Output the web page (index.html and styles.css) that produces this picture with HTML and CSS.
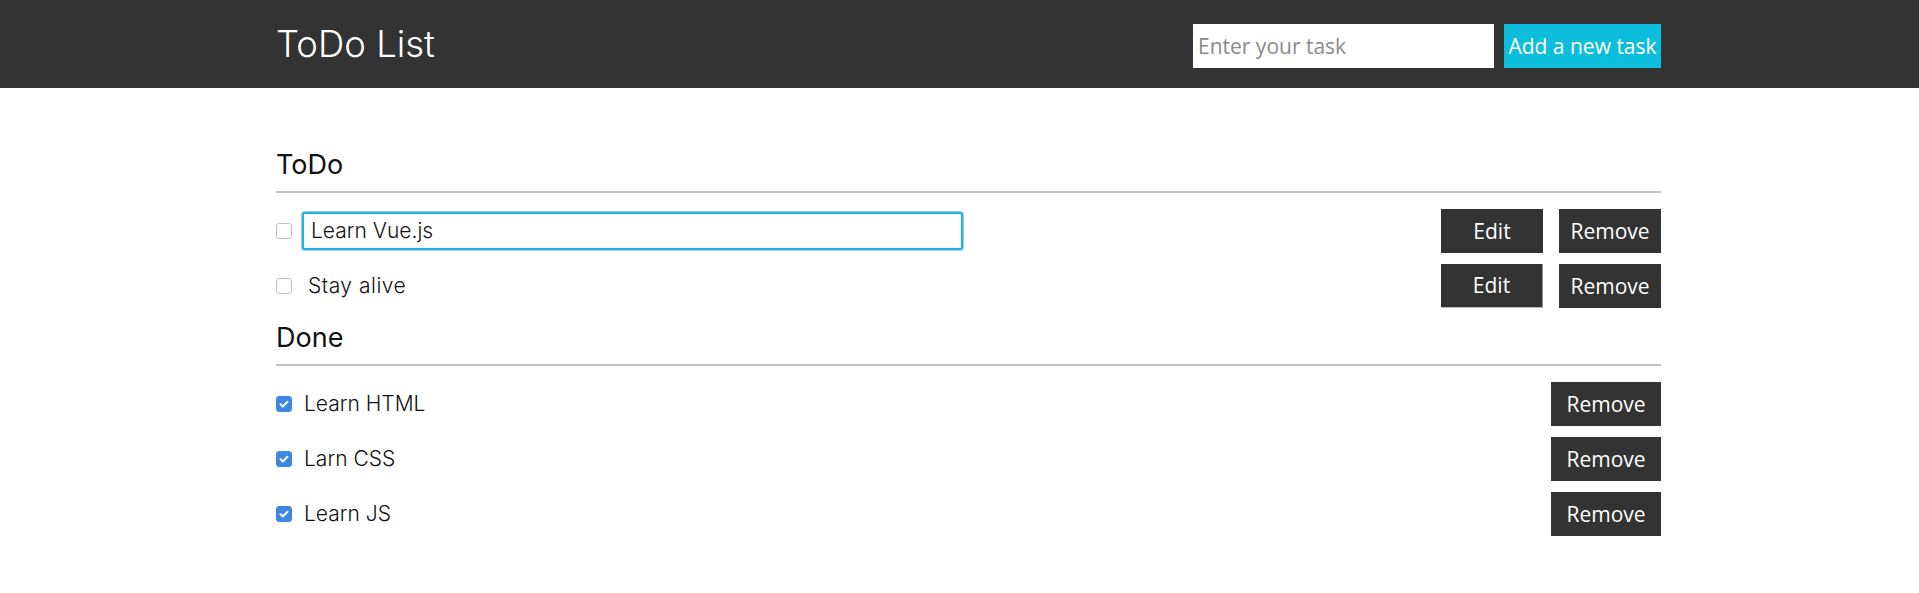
FILE: index.html
```html
<!DOCTYPE html>
<html>
<head>
<meta charset="utf-8">
<title>ToDo List</title>
<link rel="stylesheet" href="styles.css">
</head>
<body>
<header class="topbar">
  <div class="topbar-inner">
    <h1 class="brand">ToDo List</h1>
    <div class="add-form">
      <input class="task-input" type="text" placeholder="Enter your task">
      <button class="add-btn">Add a new task</button>
    </div>
  </div>
</header>
<main class="content">
  <section class="group">
    <h2 class="group-title">ToDo</h2>
    <div class="row">
      <span class="box"></span>
      <input class="edit-input" type="text" value="Learn Vue.js">
      <div class="actions">
        <button class="btn">Edit</button>
        <button class="btn">Remove</button>
      </div>
    </div>
    <div class="row">
      <span class="box"></span>
      <span class="label label-todo">Stay alive</span>
      <div class="actions">
        <button class="btn btn-hover">Edit</button>
        <button class="btn">Remove</button>
      </div>
    </div>
  </section>
  <section class="group">
    <h2 class="group-title">Done</h2>
    <div class="row">
      <span class="box checked"><svg viewBox="0 0 16 16" width="16" height="16"><path d="M4 8.2l2.6 2.6L12 5.4" fill="none" stroke="#fff" stroke-width="2.2" stroke-linecap="round" stroke-linejoin="round"/></svg></span>
      <span class="label">Learn HTML</span>
      <div class="actions"><button class="btn btn-wide">Remove</button></div>
    </div>
    <div class="row">
      <span class="box checked"><svg viewBox="0 0 16 16" width="16" height="16"><path d="M4 8.2l2.6 2.6L12 5.4" fill="none" stroke="#fff" stroke-width="2.2" stroke-linecap="round" stroke-linejoin="round"/></svg></span>
      <span class="label">Larn CSS</span>
      <div class="actions"><button class="btn btn-wide">Remove</button></div>
    </div>
    <div class="row">
      <span class="box checked"><svg viewBox="0 0 16 16" width="16" height="16"><path d="M4 8.2l2.6 2.6L12 5.4" fill="none" stroke="#fff" stroke-width="2.2" stroke-linecap="round" stroke-linejoin="round"/></svg></span>
      <span class="label">Learn JS</span>
      <div class="actions"><button class="btn btn-wide">Remove</button></div>
    </div>
  </section>
</main>
</body>
</html>
```
FILE: styles.css
```css
* { box-sizing: border-box; }
html, body { margin: 0; padding: 0; background: #fff; }
body { font-family: "Inter", "Lato", sans-serif; color: #111; }

.topbar { background: #333; height: 88px; }
.topbar-inner {
  width: 1385px;
  margin-left: 276px;
  height: 88px;
  display: flex;
  justify-content: space-between;
  align-items: center;
}
.brand {
  margin: 0;
  color: #fff;
  font-weight: 300;
  font-size: 36.5px;
  line-height: 44px;
}
.add-form { display: flex; gap: 10px; margin-top: 4px; }
.task-input {
  width: 301px;
  height: 44px;
  border: none;
  outline: none;
  padding: 0 5px;
  font-family: "Open Sans", sans-serif;
  font-size: 21px;
  color: #333;
  background: #fff;
}
.task-input::placeholder { color: #8a8a8a; }
.add-btn {
  height: 44px;
  width: 157px;
  border: none;
  padding: 0;
  background: #0dbedc;
  color: #fff;
  font-family: "Open Sans", sans-serif;
  font-size: 21px;
}

.content { width: 1385px; margin-left: 276px; padding-top: 59px; }
.group-title {
  margin: 0;
  font-size: 27px;
  font-weight: 400;
  line-height: 36px;
  padding-bottom: 8px;
  border-bottom: 2px solid #c2c2c2;
  margin-bottom: 10px;
}
.group + .group .group-title { margin-top: 7px; }

.row { height: 55px; display: flex; align-items: center; }
.box {
  width: 16px; height: 16px;
  border: 1px solid #c4c0bc;
  border-radius: 3px;
  background: #fff;
  flex: none;
  display: flex; align-items: center; justify-content: center;
}
.box.checked { background: #3f88e2; border-color: #3f88e2; }
.box svg { width: 14px; height: 14px; }

.edit-input {
  margin-left: 10px;
  width: 661px;
  height: 38px;
  border: 2px solid #1db6e4;
  border-radius: 3px;
  box-shadow: 0 0 0 1px rgba(110, 140, 235, 0.55);
  outline: none;
  padding: 0 7px;
  font-family: "Inter", "Lato", sans-serif;
  font-weight: 300;
  font-size: 21px;
  color: #111;
}
.label {
  margin-left: 12px;
  font-size: 21px;
  font-weight: 300;
  color: #111;
}
.label-todo { margin-left: 16px; letter-spacing: 0.5px; }

.actions { margin-left: auto; display: flex; gap: 16px; }
.btn {
  width: 102px;
  height: 44px;
  border: none;
  padding: 0;
  background: #333;
  color: #fff;
  font-family: "Open Sans", sans-serif;
  font-size: 21px;
}
.btn-wide { width: 110px; height: 44px; }
.btn-hover { border-right: 1px solid #888; border-bottom: 1px solid #bbb; }
```
